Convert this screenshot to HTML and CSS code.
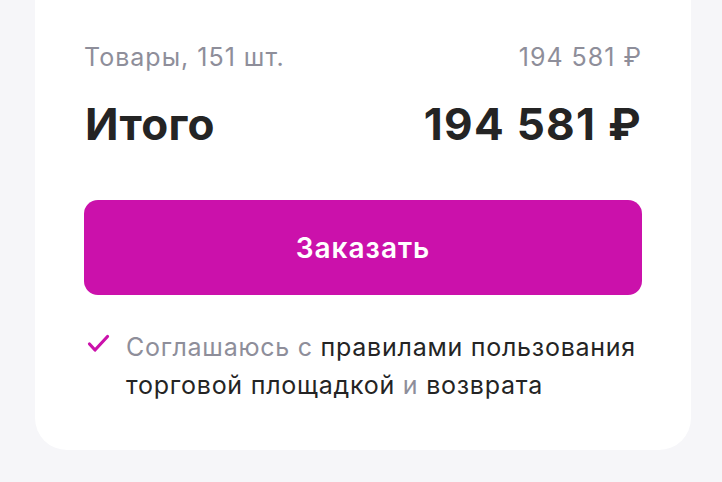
FILE: index.html
```html
<!DOCTYPE html>
<html lang="ru">
<head>
<meta charset="utf-8">
<link rel="stylesheet" href="styles.css">
</head>
<body>
<div class="card">
  <div class="row sub">
    <span>Товары, 151 шт.</span>
    <span>194 581 ₽</span>
  </div>
  <div class="row total">
    <span class="total-label">Итого</span>
    <span class="total-sum">194 581 ₽</span>
  </div>
  <button class="order">Заказать</button>
  <div class="agree">
    <svg class="check" width="23" height="19" viewBox="0 0 23 19"><path d="M2.5 10 L8 16 L20.5 2.5" fill="none" stroke="#cb11ab" stroke-width="3.2" stroke-linecap="round" stroke-linejoin="round"/></svg>
    <p class="agree-text"><span class="muted">Соглашаюсь с</span> правилами пользования торговой площадкой <span class="muted">и</span> возврата</p>
  </div>
</div>
</body>
</html>
```

FILE: styles.css
```css
* { box-sizing: border-box; }
html, body { margin: 0; padding: 0; }
body {
  background: #f6f6f9;
  font-family: Inter, "Noto Sans", sans-serif;
  width: 722px;
  height: 482px;
  overflow: hidden;
}
.card {
  background: #fff;
  margin-left: 35px;
  width: 656px;
  padding: 42px 49px 46px 49px;
  border-radius: 0 0 32px 32px;
}
.row {
  display: flex;
  justify-content: space-between;
  align-items: baseline;
}
.sub {
  font-size: 25px;
  line-height: 30px;
  color: #8e8e9a;
  letter-spacing: 1px;
}
.total {
  margin-top: 27px;
  font-size: 44px;
  line-height: 50px;
  font-weight: 700;
  color: #242424;
}
.total-label { letter-spacing: 0.3px; margin-left: 1px; }
.total-sum { letter-spacing: 1.3px; }
.order {
  display: block;
  width: 100%;
  height: 95px;
  margin-top: 51px;
  border: none;
  border-radius: 14px;
  background: #cb11ab;
  color: #fff;
  font-family: inherit;
  font-size: 28px;
  font-weight: 600;
  letter-spacing: 1px;
}
.agree {
  display: flex;
  gap: 16px;
  margin-top: 33px;
  padding-left: 3px;
}
.check { flex: none; margin-top: 6px; }
.agree-text {
  margin: 0;
  font-size: 25px;
  line-height: 38px;
  color: #242424;
  letter-spacing: 0.75px;
}
.muted { color: #8e8e9a; }
```
